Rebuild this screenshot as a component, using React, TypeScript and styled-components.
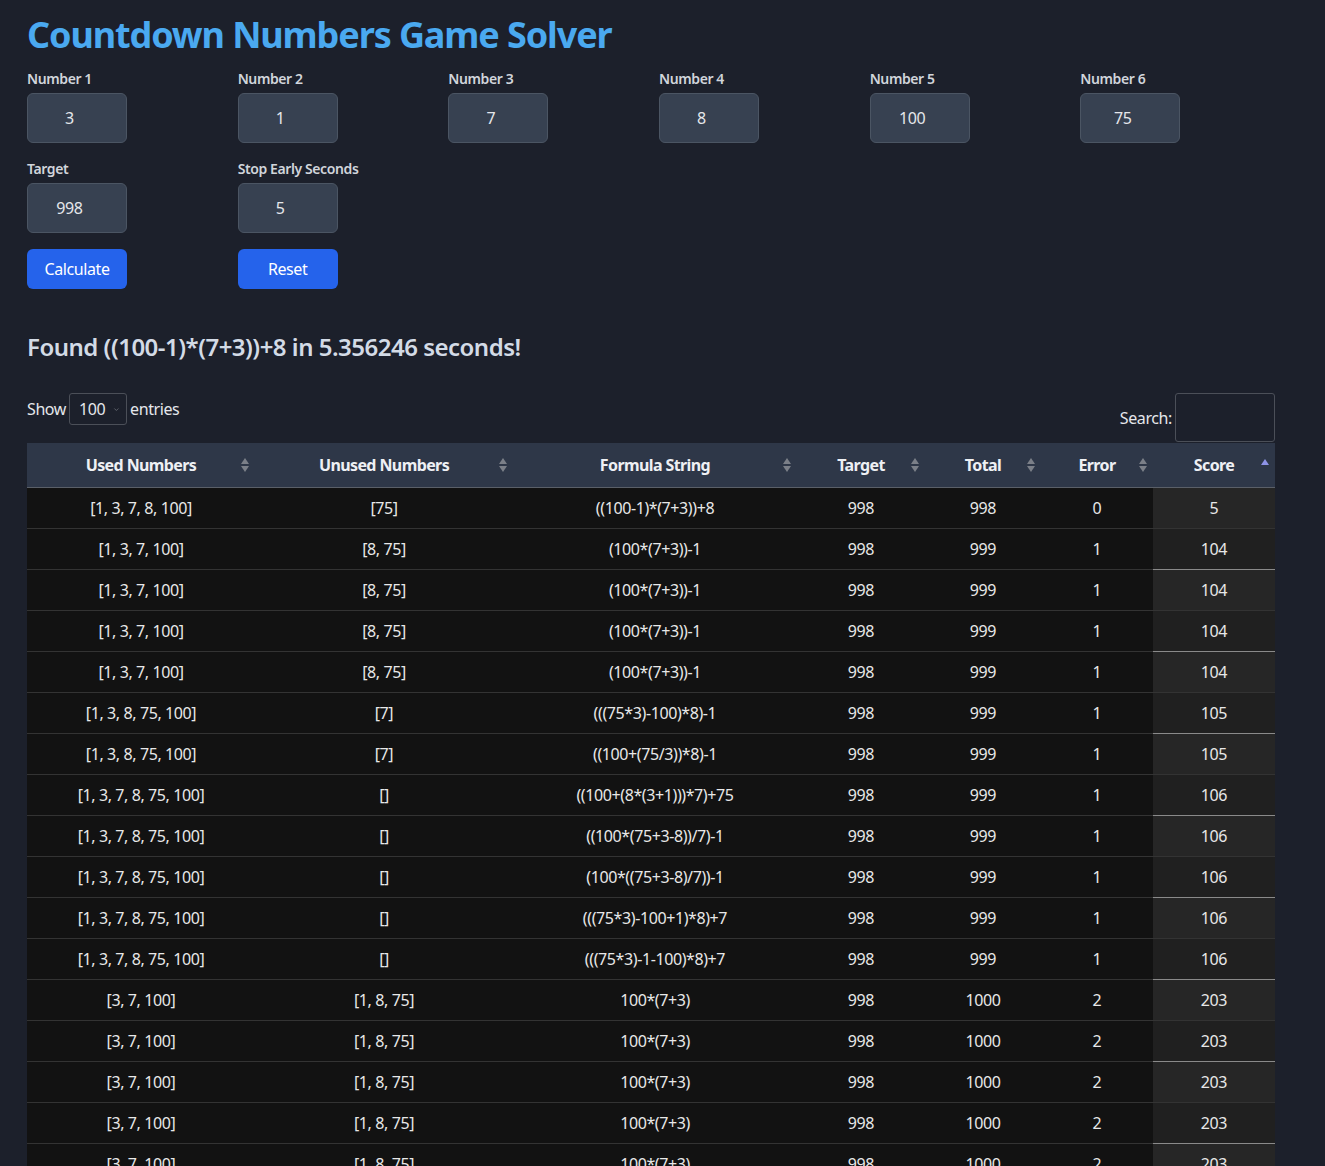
import React from 'react'
import styled, {createGlobalStyle, css} from 'styled-components'

const GlobalStyle = createGlobalStyle`
  html, body {
    margin: 0;
    background: #1c202b;
    font-family: "Noto Sans", "Open Sans", sans-serif;
    letter-spacing: -0.4px;
    color: #e5e7eb;
  }
  ::-webkit-scrollbar {
    width: 0;
    height: 0;
  }
`

const Page = styled.div`
  width: 1248px;
  padding: 12px 50px 0 27px;
`

const Title = styled.h1`
  margin: 0;
  font-size: 36px;
  line-height: 46px;
  font-weight: 700;
  letter-spacing: -1.1px;
  color: #4aa9f0;
`

const FormGrid = styled.div`
  display: grid;
  grid-template-columns: repeat(6, 1fr);
  column-gap: 16px;
  row-gap: 16px;
  margin-top: 11px;
`

const Field = styled.label`
  display: flex;
  flex-direction: column;
  gap: 4px;
`

const FieldLabel = styled.span`
  font-size: 14px;
  line-height: 20px;
  font-weight: 600;
  color: #d1d5db;
`

const NumberInput = styled.input`
  box-sizing: border-box;
  width: 100px;
  height: 50px;
  padding: 8px;
  border: 1px solid #4b5563;
  border-radius: 6px;
  background: #374151;
  color: #e5e7eb;
  font-family: inherit;
  font-size: 16px;
  letter-spacing: inherit;
  text-align: center;
  outline: none;
`

const Button = styled.button`
  width: 100px;
  height: 40px;
  border: none;
  border-radius: 6px;
  background: #2563eb;
  color: #fff;
  font-family: inherit;
  font-size: 16px;
  letter-spacing: inherit;
  cursor: pointer;
`

const Found = styled.h2`
  margin: 42px 0 0;
  font-size: 24px;
  line-height: 32px;
  font-weight: 600;
  letter-spacing: -0.5px;
  color: #d3dbe6;
`

const Controls = styled.div`
  display: flex;
  justify-content: space-between;
  align-items: flex-end;
  margin-top: 30px;
  font-size: 16px;
  color: #e5e7eb;
`

const Length = styled.div`
  display: flex;
  align-items: center;
  gap: 3px;
  align-self: flex-start;
`

const LengthSelect = styled.div`
  box-sizing: border-box;
  display: flex;
  align-items: center;
  gap: 8px;
  width: 58px;
  height: 32px;
  padding: 0 6px 0 9px;
  border: 1px solid #4b4f58;
  border-radius: 3px;
  font-size: 16px;
`

const Chevron = styled.svg`
  width: 9px;
  height: 9px;
  color: #6b6f78;
`

const SearchBox = styled.label`
  display: flex;
  align-items: center;
  gap: 3px;
`

const SearchInput = styled.input`
  box-sizing: border-box;
  width: 100px;
  height: 49px;
  border: 1px solid #4b4f58;
  border-radius: 3px;
  background: transparent;
  color: #e5e7eb;
  outline: none;
`

const Table = styled.table`
  width: 1248px;
  margin-top: 1px;
  border-collapse: collapse;
  table-layout: fixed;
  font-size: 16px;
`

const Th = styled.th`
  position: relative;
  padding: 10px 18px;
  line-height: 24px;
  font-weight: 700;
  letter-spacing: -0.6px;
  text-align: center;
  color: #eef0f4;
  background: #2e3748;
  border-bottom: 1px solid #5a5f68;
`

const SortIcon = styled.span<{$active?: boolean}>`
  position: absolute;
  right: 6px;
  top: 50%;
  transform: translateY(-50%);
  display: flex;
  flex-direction: column;
  gap: 2px;

  &::before,
  &::after {
    content: '';
    display: block;
    width: 0;
    height: 0;
    border-left: 4px solid transparent;
    border-right: 4px solid transparent;
  }
  &::before {
    border-bottom: 6px solid #7b7f88;
  }
  &::after {
    border-top: 6px solid #7b7f88;
  }

  ${({$active}) =>
    $active &&
    css`
      top: 16px;
      transform: none;
      &::before {
        border-bottom-color: #8e93e6;
      }
      &::after {
        visibility: hidden;
      }
    `}
`

const Td = styled.td<{$sorted?: boolean; $odd?: boolean; $lightTop?: boolean}>`
  padding: 8px 10px;
  line-height: 24px;
  text-align: center;
  color: #e8e8e8;
  background: #121212;
  border-top: 1px solid #333;
  white-space: nowrap;

  ${({$sorted, $odd}) =>
    $sorted &&
    css`
      background: ${$odd ? '#262626' : '#202020'};
    `}
  ${({$sorted, $lightTop}) =>
    $sorted &&
    $lightTop &&
    css`
      border-top-color: #8a8a8a;
    `}
`

const Tr = styled.tr`
  &:first-child td {
    border-top: none;
  }
`

type Row = [string, string, string, number, number, number, number]

const rows: Row[] = [
  ['[1, 3, 7, 8, 100]', '[75]', '((100-1)*(7+3))+8', 998, 998, 0, 5],
  ['[1, 3, 7, 100]', '[8, 75]', '(100*(7+3))-1', 998, 999, 1, 104],
  ['[1, 3, 7, 100]', '[8, 75]', '(100*(7+3))-1', 998, 999, 1, 104],
  ['[1, 3, 7, 100]', '[8, 75]', '(100*(7+3))-1', 998, 999, 1, 104],
  ['[1, 3, 7, 100]', '[8, 75]', '(100*(7+3))-1', 998, 999, 1, 104],
  ['[1, 3, 8, 75, 100]', '[7]', '(((75*3)-100)*8)-1', 998, 999, 1, 105],
  ['[1, 3, 8, 75, 100]', '[7]', '((100+(75/3))*8)-1', 998, 999, 1, 105],
  ['[1, 3, 7, 8, 75, 100]', '[]', '((100+(8*(3+1)))*7)+75', 998, 999, 1, 106],
  ['[1, 3, 7, 8, 75, 100]', '[]', '((100*(75+3-8))/7)-1', 998, 999, 1, 106],
  ['[1, 3, 7, 8, 75, 100]', '[]', '(100*((75+3-8)/7))-1', 998, 999, 1, 106],
  ['[1, 3, 7, 8, 75, 100]', '[]', '(((75*3)-100+1)*8)+7', 998, 999, 1, 106],
  ['[1, 3, 7, 8, 75, 100]', '[]', '(((75*3)-1-100)*8)+7', 998, 999, 1, 106],
  ['[3, 7, 100]', '[1, 8, 75]', '100*(7+3)', 998, 1000, 2, 203],
  ['[3, 7, 100]', '[1, 8, 75]', '100*(7+3)', 998, 1000, 2, 203],
  ['[3, 7, 100]', '[1, 8, 75]', '100*(7+3)', 998, 1000, 2, 203],
  ['[3, 7, 100]', '[1, 8, 75]', '100*(7+3)', 998, 1000, 2, 203],
  ['[3, 7, 100]', '[1, 8, 75]', '100*(7+3)', 998, 1000, 2, 203],
  ['[3, 7, 100]', '[1, 8, 75]', '100*(7+3)', 998, 1000, 2, 203],
]

const columns = [
  {title: 'Used Numbers', width: 228},
  {title: 'Unused Numbers', width: 258},
  {title: 'Formula String', width: 284},
  {title: 'Target', width: 128},
  {title: 'Total', width: 116},
  {title: 'Error', width: 112},
  {title: 'Score', width: 122},
]

const numbers = [3, 1, 7, 8, 100, 75]

export default function App() {
  return (
    <>
      <GlobalStyle />
      <Page>
        <Title>Countdown Numbers Game Solver</Title>

        <FormGrid>
          {numbers.map((n, i) => (
            <Field key={i}>
              <FieldLabel>Number {i + 1}</FieldLabel>
              <NumberInput type="number" defaultValue={n} />
            </Field>
          ))}
          <Field>
            <FieldLabel>Target</FieldLabel>
            <NumberInput type="number" defaultValue={998} />
          </Field>
          <Field>
            <FieldLabel>Stop Early Seconds</FieldLabel>
            <NumberInput type="number" defaultValue={5} />
          </Field>
          <div style={{gridColumn: '3 / span 4'}} />
          <Button>Calculate</Button>
          <Button>Reset</Button>
        </FormGrid>

        <Found>Found ((100-1)*(7+3))+8 in 5.356246 seconds!</Found>

        <Controls>
          <Length>
            Show
            <LengthSelect>
              100
              <Chevron viewBox="0 0 10 10" fill="none" stroke="currentColor" strokeWidth="1.2">
                <path d="M2 3.5 L5 6.5 L8 3.5" />
              </Chevron>
            </LengthSelect>
            entries
          </Length>
          <SearchBox>
            Search:
            <SearchInput type="search" />
          </SearchBox>
        </Controls>

        <Table>
          <colgroup>
            {columns.map(c => (
              <col key={c.title} style={{width: c.width}} />
            ))}
          </colgroup>
          <thead>
            <tr>
              {columns.map((c, i) => (
                <Th key={c.title}>
                  {c.title}
                  <SortIcon $active={i === columns.length - 1} />
                </Th>
              ))}
            </tr>
          </thead>
          <tbody>
            {rows.map((r, ri) => (
              <Tr key={ri}>
                {r.map((cell, ci) => (
                  <Td
                    key={ci}
                    $sorted={ci === 6}
                    $odd={ri % 2 === 0}
                    $lightTop={ri > 0 && ri % 2 === 0}
                  >
                    {cell}
                  </Td>
                ))}
              </Tr>
            ))}
          </tbody>
        </Table>
      </Page>
    </>
  )
}
